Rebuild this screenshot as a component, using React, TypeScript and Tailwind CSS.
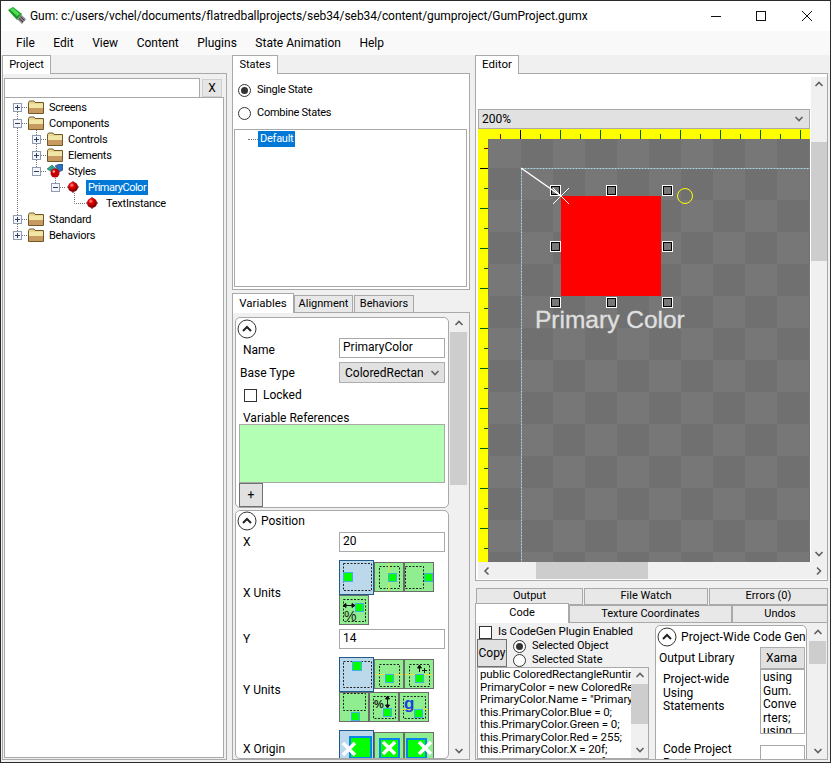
import React from "react";

const FONT = "font-['Roboto','Liberation_Sans',sans-serif]";

function Chev({ dir, className = "" }: { dir: "up" | "down" | "left" | "right"; className?: string }) {
  const d = {
    up: "M1.5 6 L5 2.5 L8.5 6",
    down: "M1.5 3 L5 6.5 L8.5 3",
    left: "M6.5 1.5 L3 5 L6.5 8.5",
    right: "M3 1.5 L6.5 5 L3 8.5",
  }[dir];
  return (
    <svg width="10" height="10" viewBox="0 0 10 10" className={className}>
      <path d={d} fill="none" stroke="#606060" strokeWidth="1.6" />
    </svg>
  );
}

function VScroll({ thumb, className = "" }: { thumb: string; className?: string }) {
  return (
    <div className={`flex flex-col bg-[#f0f0f0] ${className}`}>
      <div className="h-4 shrink-0 flex items-center justify-center">
        <Chev dir="up" />
      </div>
      <div className="flex-1 min-h-0">
        <div className={`bg-[#cdcdcd] ${thumb}`} />
      </div>
      <div className="h-4 shrink-0 flex items-center justify-center">
        <Chev dir="down" />
      </div>
    </div>
  );
}

function Tab({ label, active, className = "" }: { label: string; active?: boolean; className?: string }) {
  return (
    <div
      className={`flex items-center justify-center border border-[#a9a9a9] text-black ${
        active ? "bg-white border-b-0 relative z-10" : "bg-[#e8e8e8]"
      } ${className}`}
    >
      {label}
    </div>
  );
}

function Radio({ on }: { on?: boolean }) {
  return (
    <span className="w-[13px] h-[13px] rounded-full border border-[#333] bg-white flex items-center justify-center shrink-0">
      {on && <span className="w-[7px] h-[7px] rounded-full bg-[#333]" />}
    </span>
  );
}

function Check() {
  return <span className="w-[13px] h-[13px] border border-[#333] bg-white shrink-0" />;
}

function Collapse({ className = "" }: { className?: string }) {
  return (
    <svg width="20" height="20" viewBox="0 0 20 20" className={`shrink-0 ${className}`}>
      <circle cx="10" cy="10" r="9" fill="#fff" stroke="#333" strokeWidth="1" />
      <path d="M6 12 L10 8 L14 12" fill="none" stroke="#222" strokeWidth="2" />
    </svg>
  );
}

function Expander({ open }: { open?: boolean }) {
  return (
    <svg width="9" height="9" viewBox="0 0 9 9" className="shrink-0">
      <rect x="0.5" y="0.5" width="8" height="8" fill="#f4f6fa" stroke="#8e9bb0" />
      <path d={open ? "M2 4.5H7" : "M2 4.5H7M4.5 2V7"} stroke="#2c3e66" />
    </svg>
  );
}

function Folder() {
  return (
    <svg width="16" height="14" viewBox="0 0 16 14" className="shrink-0 block">
      <path d="M0.5 2.5 L1.5 1 H6 L7 2.5 H15.5 V13.5 H0.5 Z" fill="#e9d693" stroke="#6f5a28" />
      <rect x="1" y="4" width="14" height="4" fill="#f1e6a6" />
      <rect x="1" y="8" width="14" height="5" fill="#c89a62" />
    </svg>
  );
}

function Ball() {
  return (
    <svg width="12" height="12" viewBox="0 0 12 12" className="shrink-0 block">
      <defs>
        <radialGradient id="ballG" cx="0.38" cy="0.32" r="0.7">
          <stop offset="0" stopColor="#ff9a9a" />
          <stop offset="0.35" stopColor="#e00000" />
          <stop offset="1" stopColor="#6a0000" />
        </radialGradient>
      </defs>
      <circle cx="6" cy="6" r="5" fill="url(#ballG)" />
      <path d="M6 0V1M0 6H1M11 6H12M6 11V12" stroke="#7a0000" strokeWidth="1" />
    </svg>
  );
}

function StylesIcon() {
  return (
    <svg width="16" height="14" viewBox="0 0 16 14" className="shrink-0 block">
      <path d="M0 5 L5 1 L9 5 L5 8 Z" fill="#2f9e8f" stroke="#164" strokeWidth="0.5" />
      <path d="M8 2 L12 0 H16 V6 L12 8 Z" fill="#2c6fc0" stroke="#134" strokeWidth="0.5" />
      <circle cx="8" cy="9" r="4.5" fill="#c40000" />
      <circle cx="6.8" cy="7.6" r="1.3" fill="#ff9a9a" />
    </svg>
  );
}

function Row({
  depth,
  expander,
  icon,
  label,
  selected,
  leaf,
  labelClass = "ml-[3px]",
}: {
  depth: number;
  expander?: "open" | "closed";
  icon: React.ReactNode;
  label: string;
  selected?: boolean;
  leaf?: boolean;
  labelClass?: string;
}) {
  const pl = ["pl-[8px]", "pl-[27px]", "pl-[46px]", "pl-[81px]"][depth];
  return (
    <div className={`h-4 flex items-center ${pl}`}>
      {!leaf && <Expander open={expander === "open"} />}
      {!leaf && <span className="w-[6px] shrink-0" />}
      <span className={depth === 2 ? "ml-[1px]" : ""}>{icon}</span>
      <span
        className={`${labelClass} px-[2px] leading-[15px] h-[15px] ${
          selected ? "bg-[#0078d7] text-white tracking-[-0.5px]" : "text-black"
        }`}
      >
        {label}
      </span>
    </div>
  );
}

function Tree() {
  return (
    <div className="relative pt-[1px] h-full bg-white text-[11px] tracking-[-0.25px]">
      <svg className="absolute left-0 top-0" width="120" height="150">
        <g stroke="#777" strokeDasharray="1 1" fill="none">
          <path d="M12.5 14V138" />
          <path d="M17 9.5H23M17 25.5H23M17 121.5H23M17 137.5H23" />
          <path d="M31.5 30V74" />
          <path d="M36 41.5H42M36 57.5H42M36 73.5H42" />
          <path d="M50.5 78V90" />
          <path d="M55 89.5H61" />
          <path d="M69.5 95V105.5H81" />
        </g>
      </svg>
      <div className="relative">
        <Row depth={0} expander="closed" icon={<Folder />} label="Screens" />
        <Row depth={0} expander="open" icon={<Folder />} label="Components" />
        <Row depth={1} expander="closed" icon={<Folder />} label="Controls" />
        <Row depth={1} expander="closed" icon={<Folder />} label="Elements" />
        <Row depth={1} expander="open" icon={<StylesIcon />} label="Styles" />
        <Row depth={2} expander="open" icon={<Ball />} label="PrimaryColor" selected labelClass="ml-[7px]" />
        <Row depth={3} leaf icon={<Ball />} label="TextInstance" labelClass="ml-[6px]" />
        <Row depth={0} expander="closed" icon={<Folder />} label="Standard" />
        <Row depth={0} expander="closed" icon={<Folder />} label="Behaviors" />
      </div>
    </div>
  );
}

function Unit({
  selected,
  children,
  dash,
  flush,
}: {
  selected?: boolean;
  children?: React.ReactNode;
  dash?: [number, number, number, number];
  flush?: boolean;
}) {
  const s = selected ? 35 : 30;
  return (
    <svg
      width={s}
      height={s}
      viewBox={`0 0 ${s} ${s}`}
      className={`shrink-0 ${selected || flush ? "" : "mt-[2px]"}`}
    >
      <rect
        x="0.5"
        y="0.5"
        width={s - 1}
        height={s - 1}
        fill={selected ? "#bcd9ec" : "#90ee90"}
        stroke={selected ? "#1f5a8c" : "#6b6b6b"}
      />
      {dash && (
        <rect
          x={dash[0] + 0.5}
          y={dash[1] + 0.5}
          width={dash[2] - dash[0]}
          height={dash[3] - dash[1]}
          fill="none"
          stroke="#222"
          strokeDasharray="2 1.5"
        />
      )}
      {children}
    </svg>
  );
}

function Sq({ x, y, s = 8 }: { x: number; y: number; s?: number }) {
  return <rect x={x + 0.5} y={y + 0.5} width={s} height={s} fill="#00ff00" stroke="#45aee8" strokeWidth="1" />;
}

function OriginX({ x, y }: { x: number; y: number }) {
  return (
    <path
      d={`M${x - 6} ${y - 6} L${x + 6} ${y + 6} M${x + 6} ${y - 6} L${x - 6} ${y + 6}`}
      stroke="#fff"
      strokeWidth="3.5"
    />
  );
}

function FormInput({ value }: { value: string }) {
  return (
    <div className="w-[106px] h-5 border border-[#a9a9a9] bg-white pl-[3px] leading-[16px] text-black">{value}</div>
  );
}

function VariablesPanel() {
  return (
    <div className="flex-1 min-h-0 border border-[#a9a9a9] bg-[#f0f0f0] flex pl-[2px] pt-[4px] overflow-hidden">
      <div className="w-[214px] shrink-0 flex flex-col">
        <div className="h-[191px] shrink-0 border border-[#a9a9a9] rounded-[5px] bg-white relative">
          <Collapse className="ml-[1px] mt-[1px]" />
          <div className="flex items-center pl-[7px] h-5 mt-[-1px]">
            <span className="w-[96px] pt-[3px]">Name</span>
            <FormInput value="PrimaryColor" />
          </div>
          <div className="flex items-center pl-[4px] h-[21px] mt-[4px]">
            <span className="w-[99px]">Base Type</span>
            <div className="w-[106px] h-[21px] border border-[#adadad] bg-[#e1e1e1] pl-[5px] pr-[4px] flex items-center justify-between overflow-hidden">
              <span className="overflow-hidden whitespace-nowrap w-[78px]">ColoredRectangle</span>
              <Chev dir="down" />
            </div>
          </div>
          <div className="flex items-center pl-[8px] mt-[5px] h-[14px]">
            <Check />
            <span className="ml-[6px]">Locked</span>
          </div>
          <div className="pl-[7px] mt-[8px] h-4 leading-4">Variable References</div>
          <div className="ml-[3px] w-[206px] h-[59px] mt-[-2px] bg-[#b3ffb3] border border-[#a9a9a9]" />
          <div className="ml-[3px] w-6 h-6 bg-[#e1e1e1] border border-[#707070] flex items-center justify-center leading-none">
            +
          </div>
        </div>
        <div className="mt-[2px] flex-1 border border-[#a9a9a9] rounded-[5px] bg-white overflow-hidden h-[260px]">
          <div className="flex items-center h-5 ml-[1px]">
            <Collapse />
            <span className="ml-[4px]">Position</span>
          </div>
          <div className="flex items-center pl-[7px] h-5 mt-[1px]">
            <span className="w-[96px]">X</span>
            <FormInput value="20" />
          </div>
          <div className="flex items-center pl-[7px] mt-[8px]">
            <span className="w-[96px]">X Units</span>
            <div className="flex flex-wrap w-[100px] items-start">
              <Unit selected dash={[4, 3, 32, 30]}>
                <Sq x={4} y={12} s={9} />
              </Unit>
              <Unit dash={[5, 4, 25, 26]}>
                <path d="M14.5 1V29" stroke="#e8e040" />
                <Sq x={14} y={11} />
              </Unit>
              <Unit dash={[1, 4, 19, 26]}>
                <Sq x={20} y={11} />
              </Unit>
              <Unit dash={[4, 4, 26, 26]} flush>
                <path d="M4 10.5H16M4 10.5l3-2v4zM16 10.5l-3-2v4z" stroke="#111" fill="#111" />
                <Sq x={16} y={8} />
                <text x="5" y="26" fontSize="14" fill="#222" fontFamily="Liberation Sans">
                  %
                </text>
              </Unit>
            </div>
          </div>
          <div className="flex items-center pl-[7px] h-5 mt-[4px]">
            <span className="w-[96px]">Y</span>
            <FormInput value="14" />
          </div>
          <div className="flex items-center pl-[7px] mt-[8px]">
            <span className="w-[96px]">Y Units</span>
            <div className="flex flex-wrap w-[100px] items-start">
              <Unit selected dash={[4, 4, 32, 30]}>
                <Sq x={13} y={4} s={9} />
              </Unit>
              <Unit dash={[5, 5, 25, 27]}>
                <path d="M1 15.5H29" stroke="#e8e040" />
                <Sq x={11} y={15} />
              </Unit>
              <Unit dash={[5, 5, 25, 27]}>
                <path d="M1 15.5H29" stroke="#e8e040" />
                <path d="M15.5 13V7M13.5 9l2-3 2 3z" stroke="#111" fill="#111" />
                <path d="M18 11.5H23M20.5 9V14" stroke="#111" />
                <Sq x={11} y={15} />
              </Unit>
              <Unit dash={[4, 1, 26, 18]} flush>
                <Sq x={12} y={20} />
              </Unit>
              <Unit dash={[4, 4, 26, 26]} flush>
                <text x="5" y="16" fontSize="11" fontWeight="bold" fill="#222" fontFamily="Liberation Sans">
                  %
                </text>
                <path d="M18.5 5V15M16.5 7l2-3 2 3zM16.5 13l2 3 2-3z" stroke="#111" fill="#111" />
                <Sq x={14} y={16} />
              </Unit>
              <Unit dash={[4, 4, 26, 26]} flush>
                <path d="M1 17.5H29" stroke="#e8e040" />
                <text x="5" y="17" fontSize="17" fontWeight="bold" fill="#1a3fe0" fontFamily="Liberation Sans">
                  g
                </text>
                <Sq x={15} y={17} />
              </Unit>
            </div>
          </div>
          <div className="flex items-start pl-[7px] mt-[8px]">
            <span className="w-[96px] pt-[10px]">X Origin</span>
            <div className="flex flex-wrap w-[100px] items-start">
              <Unit selected>
                <rect x="11" y="7" width="21" height="21" fill="#00ff00" stroke="#0a84e8" strokeWidth="2" />
                <OriginX x={10} y={19} />
              </Unit>
              <Unit>
                <rect x="6" y="7" width="19" height="19" fill="#00ff00" stroke="#0a84e8" strokeWidth="2" />
                <OriginX x={15} y={16} />
              </Unit>
              <Unit>
                <rect x="3" y="7" width="19" height="19" fill="#00ff00" stroke="#0a84e8" strokeWidth="2" />
                <OriginX x={21} y={16} />
              </Unit>
            </div>
          </div>
        </div>
      </div>
      <VScroll thumb="h-[153px]" className="w-[17px] ml-[1px] mt-[-1px] h-[443px] shrink-0" />
    </div>
  );
}

function Handle({ x, y }: { x: number; y: number }) {
  return (
    <g>
      <rect x={x - 4.5} y={y - 4.5} width="10" height="10" fill="#777" stroke="#fff" />
      <rect x={x - 3.5} y={y - 3.5} width="8" height="8" fill="none" stroke="#000" />
    </g>
  );
}

function Canvas() {
  // origin of this drawing: page (478,129)
  const topTicks: React.ReactNode[] = [];
  for (let i = 0; i < 16; i++) {
    const x = 22 + i * 20;
    const major = i % 2 === 1;
    const c = i === 0 ? "#8b0000" : i === 1 ? "#000" : "#006400";
    topTicks.push(<path key={i} d={`M${x + 0.5} ${major ? 1 : 5}V10`} stroke={c} />);
  }
  const leftTicks: React.ReactNode[] = [];
  for (let i = 0; i < 22; i++) {
    const y = 19 + i * 20;
    const major = i % 2 === 1;
    const c = i === 0 ? "#8b0000" : i === 1 ? "#000" : "#006400";
    leftTicks.push(<path key={i} d={`M${major ? 2 : 6} ${y + 0.5}H10`} stroke={c} />);
  }
  return (
    <svg width="332" height="433" viewBox="0 0 332 433" className="block">
      <defs>
        <pattern id="chk" x="11" y="7" width="64" height="64" patternUnits="userSpaceOnUse">
          <rect width="64" height="64" fill="#777777" />
          <rect x="32" y="0" width="32" height="32" fill="#707070" />
          <rect x="0" y="32" width="32" height="32" fill="#707070" />
        </pattern>
      </defs>
      <rect width="332" height="433" fill="#ffff00" />
      <rect x="10" y="10" width="322" height="423" fill="url(#chk)" />
      {topTicks}
      {leftTicks}
      <path d="M43.5 39.5H332M43.5 39.5V433" stroke="#add8e6" strokeDasharray="2 1" fill="none" />
      <rect x="83" y="67" width="100" height="100" fill="#ff0000" />
      <Handle x={77} y={61} />
      <Handle x={133} y={61} />
      <Handle x={189} y={61} />
      <Handle x={77} y={117} />
      <Handle x={189} y={117} />
      <Handle x={77} y={173} />
      <Handle x={133} y={173} />
      <Handle x={189} y={173} />
      <path d="M43 39L83 67" stroke="#fff" strokeWidth="1.5" />
      <path d="M75 59L91 75M91 59L75 75" stroke="#fff" strokeWidth="1" />
      <circle cx="207" cy="67" r="7.5" fill="none" stroke="#ffff00" />
      <text x="57" y="199" fontSize="24.5" fill="#e0e0e0" stroke="#e0e0e0" strokeWidth="0.3" fontFamily="Liberation Sans">
        Primary Color
      </text>
    </svg>
  );
}

function EditorPanel() {
  return (
    <div className="flex flex-col">
      <Tab label="Editor" active className="w-[44px] h-[19px] text-[11.5px]" />
      <div className="h-[508px] mt-[-1px] border border-[#a9a9a9] bg-white pl-[2px] pt-[3px]">
        <div className="flex">
          <div className="w-[332px] shrink-0 pt-[32px]">
            <div className="h-5 bg-[#e1e1e1] border border-[#a9a9a9] flex items-center justify-between pl-[3px] pr-[5px] leading-none">
              <span>200%</span>
              <Chev dir="down" />
            </div>
            <Canvas />
          </div>
          <VScroll thumb="mt-[49px] h-[119px]" className="w-4 ml-[1px] h-[485px] shrink-0" />
        </div>
        <div className="flex items-center w-[349px] h-[17px] bg-[#f0f0f0]">
          <span className="w-4 flex justify-center shrink-0 ml-[1px]">
            <Chev dir="left" />
          </span>
          <div className="flex-1 h-full">
            <div className="ml-[41px] w-[112px] h-full bg-[#cdcdcd]" />
          </div>
          <span className="w-4 flex justify-center shrink-0">
            <Chev dir="right" />
          </span>
        </div>
      </div>
    </div>
  );
}

function CodePanel() {
  const lines = [
    "public ColoredRectangleRuntime PrimaryColor { get; }",
    "PrimaryColor = new ColoredRectangleRuntime();",
    'PrimaryColor.Name = "PrimaryColor";',
    "this.PrimaryColor.Blue = 0;",
    "this.PrimaryColor.Green = 0;",
    "this.PrimaryColor.Red = 255;",
    "this.PrimaryColor.X = 20f;",
    "this.PrimaryColor.Y = 14f;",
  ];
  return (
    <div className="flex flex-col mt-[7px] flex-1 min-h-0">
      <div className="flex pl-[1px] h-[17px] items-stretch text-[11px]">
        <Tab label="Output" className="w-[107px] mr-[1px]" />
        <Tab label="File Watch" className="w-[124px] mr-[1px]" />
        <Tab label="Errors (0)" className="w-[119px]" />
      </div>
      <div className="flex h-[20px] mt-[-2px] text-[11px]">
        <Tab label="Code" active className="w-[94px] pb-[1px]" />
        <Tab label="Texture Coordinates" className="w-[163px] mt-[2px]" />
        <Tab label="Undos" className="w-[96px] mt-[2px]" />
      </div>
      <div className="flex-1 min-h-0 border border-[#a9a9a9] mt-[-1px] bg-[#f0f0f0] overflow-hidden flex pl-[1px]">
        <div className="w-[172px] shrink-0 flex flex-col">
          <div className="flex items-center h-[14px] mt-[2px] pl-[2px]">
            <Check />
            <span className="ml-[6px] text-[11.5px] tracking-[-0.1px]">Is CodeGen Plugin Enabled</span>
          </div>
          <div className="flex h-[28px]">
            <div className="w-[30px] h-[28px] bg-[#e1e1e1] border border-[#707070] flex items-center justify-center">
              Copy
            </div>
            <div className="ml-[6px] flex flex-col text-[11px]">
              <div className="flex items-center h-[14px] gap-[6px]">
                <Radio on />
                <span>Selected Object</span>
              </div>
              <div className="flex items-center h-[14px] gap-[6px]">
                <Radio />
                <span>Selected State</span>
              </div>
            </div>
          </div>
          <div className="flex flex-1 min-h-0 border border-[#a9a9a9] bg-white overflow-hidden">
            <div className="flex-1 min-w-0 overflow-hidden whitespace-nowrap leading-[12.5px] pl-[2px] text-[11.5px] tracking-[-0.1px]">
              {lines.map((l) => (
                <div key={l}>{l}</div>
              ))}
            </div>
            <VScroll thumb="h-[40px]" className="w-[17px] h-[90px] shrink-0" />
          </div>
        </div>
        <div className="ml-[6px] w-[152px] shrink-0 h-[160px] mt-[2px] border border-[#a9a9a9] rounded-[5px] bg-white overflow-hidden">
          <div className="flex items-center h-5 mt-[1px] ml-[1px] whitespace-nowrap tracking-[0.1px]">
            <Collapse />
            <span className="ml-[4px]">Project-Wide Code Generation</span>
          </div>
          <div className="flex h-[22px]">
            <span className="w-[104px] pl-[3px] pt-[2px]">Output Library</span>
            <div className="w-[45px] h-[22px] bg-[#e1e1e1] border border-[#adadad] pl-[5px] flex items-center">
              <span className="w-[31px] overflow-hidden whitespace-nowrap">Xamarin</span>
            </div>
          </div>
          <div className="flex h-[65px]">
            <span className="w-[104px] pl-[7px] pt-[4px] leading-[13.5px]">
              Project-wide
              <br />
              Using
              <br />
              Statements
            </span>
            <div className="w-[45px] h-[65px] border border-[#a9a9a9] pl-[2px] pt-[1px] leading-[13.5px] overflow-hidden">
              using
              <br />
              Gum.
              <br />
              Conve
              <br />
              rters;
              <br />
              using
            </div>
          </div>
          <div className="flex mt-[11px]">
            <span className="w-[104px] pl-[7px] mt-[-2px] leading-[13.5px]">
              Code Project
              <br />
              Root
            </span>
            <div className="w-[45px] h-5 border border-[#a9a9a9]" />
          </div>
        </div>
        <VScroll thumb="h-[23px]" className="w-[17px] ml-[2px] h-[134px] mt-[2px] shrink-0" />
      </div>
    </div>
  );
}

export default function App() {
  const menu = ["File", "Edit", "View", "Content", "Plugins", "State Animation", "Help"];
  return (
    <div className={`${FONT} w-[831px] h-[763px] border border-[#2b2b2b] bg-[#f0f0f0] text-[12px] text-black overflow-hidden flex flex-col box-border`}>
      <div className="h-[30px] shrink-0 bg-white flex items-center">
        <svg width="18" height="18" viewBox="0 0 18 18" className="ml-[7px]">
          <path d="M0 3 L5 0 L14 7 L9 13 Z" fill="#159a22" />
          <path d="M2 2.5 L5 1 L12 7 L9 9 Z" fill="#4fdc55" />
          <path d="M9 12 L13 7.5 L18 12 L14 17 Z" fill="#8c8c8c" />
          <path d="M11 11.5L15 15M12.5 10L16.5 13.5" stroke="#333" />
        </svg>
        <span className="ml-[4px] whitespace-nowrap tracking-[-0.05px]">
          Gum: c:/users/vchel/documents/flatredballprojects/seb34/seb34/content/gumproject/GumProject.gumx
        </span>
        <div className="flex-1" />
        <svg width="110" height="12" viewBox="0 0 110 12" className="mr-[9px]">
          <path d="M0 6.5H10" stroke="#111" />
          <rect x="45.5" y="1.5" width="9" height="9" fill="none" stroke="#111" />
          <path d="M91 1L101 11M101 1L91 11" stroke="#111" />
        </svg>
      </div>
      <div className="h-6 shrink-0 bg-[#f9f9f9] flex items-center gap-[18.5px] pl-[15px]">
        {menu.map((m) => (
          <span key={m}>{m}</span>
        ))}
      </div>
      <div className="flex-1 min-h-0 flex pl-[1px] pb-[2px]">
        <div className="w-[225px] shrink-0 flex flex-col">
          <Tab label="Project" active className="w-[49px] h-[19px] text-[11px]" />
          <div className="flex-1 min-h-0 mt-[-1px] border border-[#a9a9a9] pl-[1px] pr-[2px] pt-[4px] pb-[1px] flex flex-col">
            <div className="flex h-[20px] shrink-0">
              <div className="w-[196px] h-[20px] bg-white border border-[#a9a9a9]" />
              <div className="ml-[2px] w-[20px] h-[18px] mt-[1px] bg-[#e6e6e6] border border-[#d0d0d0] flex items-center justify-center">
                X
              </div>
            </div>
            <div className="flex-1 min-h-0 border border-[#a9a9a9] mt-[-1px]">
              <Tree />
            </div>
          </div>
        </div>
        <div className="w-[238px] ml-[5px] shrink-0 flex flex-col">
          <Tab label="States" active className="w-[46px] h-[19px] text-[11px]" />
          <div className="h-[217px] shrink-0 mt-[-1px] border border-[#a9a9a9] bg-white pl-[1px] pr-[2px] text-[11px] tracking-[-0.25px]">
            <div className="flex items-center gap-[6px] h-4 mt-[8px] pl-[4px]">
              <Radio on />
              <span>Single State</span>
            </div>
            <div className="flex items-center gap-[6px] h-4 mt-[7px] pl-[4px]">
              <Radio />
              <span>Combine States</span>
            </div>
            <div className="h-[158px] mt-[8px] border border-[#a9a9a9] bg-white flex items-start pt-[1px] pl-[13px]">
              <span className="w-[10px] border-t border-dotted border-[#777] mt-[8px]" />
              <span className="bg-[#0078d7] text-white px-[2px] leading-4">Default</span>
            </div>
          </div>
          <div className="flex h-[20px] mt-[3px] shrink-0 text-[11px]">
            <Tab label="Variables" active className="w-[62px] text-[11.5px]" />
            <Tab label="Alignment" className="w-[59px] mt-[2px]" />
            <Tab label="Behaviors" className="w-[60px] mt-[2px] ml-[1px]" />
          </div>
          <div className="flex-1 min-h-0 mt-[-1px] flex flex-col">
            <VariablesPanel />
          </div>
        </div>
        <div className="w-[353px] ml-[5px] shrink-0 flex flex-col">
          <EditorPanel />
          <CodePanel />
        </div>
      </div>
    </div>
  );
}
